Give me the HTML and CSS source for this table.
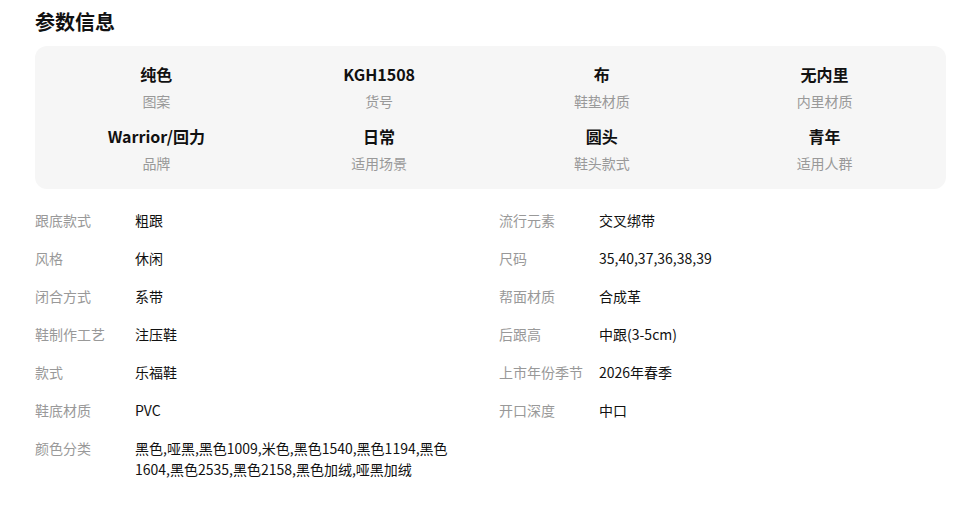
FILE: index.html
```html
<!DOCTYPE html>
<html lang="zh-CN">
<head>
    <meta charset="UTF-8">
    <meta name="viewport" content="width=device-width, initial-scale=1.0">
    <title>参数信息</title>
    <link rel="stylesheet" href="styles.css">
</head>
<body>
    <div class="params">
        <h2 class="params-title">参数信息</h2>

        <div class="params-card">
            <div class="card-item"><div class="card-value">纯色</div><div class="card-label">图案</div></div>
            <div class="card-item"><div class="card-value">KGH1508</div><div class="card-label">货号</div></div>
            <div class="card-item"><div class="card-value">布</div><div class="card-label">鞋垫材质</div></div>
            <div class="card-item"><div class="card-value">无内里</div><div class="card-label">内里材质</div></div>
            <div class="card-item"><div class="card-value">Warrior/回力</div><div class="card-label">品牌</div></div>
            <div class="card-item"><div class="card-value">日常</div><div class="card-label">适用场景</div></div>
            <div class="card-item"><div class="card-value">圆头</div><div class="card-label">鞋头款式</div></div>
            <div class="card-item"><div class="card-value">青年</div><div class="card-label">适用人群</div></div>
        </div>

        <div class="params-list">
            <div class="param-row"><span class="param-label">跟底款式</span><span class="param-value">粗跟</span></div>
            <div class="param-row"><span class="param-label">流行元素</span><span class="param-value">交叉绑带</span></div>
            <div class="param-row"><span class="param-label">风格</span><span class="param-value">休闲</span></div>
            <div class="param-row"><span class="param-label">尺码</span><span class="param-value">35,40,37,36,38,39</span></div>
            <div class="param-row"><span class="param-label">闭合方式</span><span class="param-value">系带</span></div>
            <div class="param-row"><span class="param-label">帮面材质</span><span class="param-value">合成革</span></div>
            <div class="param-row"><span class="param-label">鞋制作工艺</span><span class="param-value">注压鞋</span></div>
            <div class="param-row"><span class="param-label">后跟高</span><span class="param-value">中跟(3-5cm)</span></div>
            <div class="param-row"><span class="param-label">款式</span><span class="param-value">乐福鞋</span></div>
            <div class="param-row"><span class="param-label">上市年份季节</span><span class="param-value">2026年春季</span></div>
            <div class="param-row"><span class="param-label">鞋底材质</span><span class="param-value">PVC</span></div>
            <div class="param-row"><span class="param-label">开口深度</span><span class="param-value">中口</span></div>
            <div class="param-row"><span class="param-label">颜色分类</span><span class="param-value">黑色,哑黑,黑色1009,米色,黑色1540,黑色1194,黑色1604,黑色2535,黑色2158,黑色加绒,哑黑加绒</span></div>
        </div>
    </div>
</body>
</html>
```

FILE: styles.css
```css
body {
    margin: 0;
    background-color: #fff;
    color: #111;
    font-family: "Noto Sans CJK SC", "Noto Sans", sans-serif;
}
.params {
    width: 911px;
    padding: 8px 0 0 35px;
}
.params-title {
    margin: 0 0 10px;
    font-size: 20px;
    line-height: 28px;
    font-weight: 700;
    color: #111;
}
.params-card {
    display: grid;
    grid-template-columns: repeat(4, 1fr);
    row-gap: 13px;
    padding: 16px 10px;
    background-color: #f6f6f6;
    border-radius: 12px;
}
.card-item {
    text-align: center;
}
.card-value {
    font-size: 16px;
    line-height: 24px;
    font-weight: 700;
    color: #111;
}
.card-label {
    margin-top: 5px;
    font-size: 14px;
    line-height: 20px;
    color: #999;
}
.params-list {
    display: grid;
    grid-template-columns: 464px 1fr;
    row-gap: 17px;
    margin-top: 21px;
}
.param-row {
    display: flex;
    font-size: 14px;
    line-height: 21px;
}
.param-label {
    flex: 0 0 100px;
    color: #999;
}
.param-value {
    flex: 1;
    padding-right: 20px;
    color: #111;
}
```
